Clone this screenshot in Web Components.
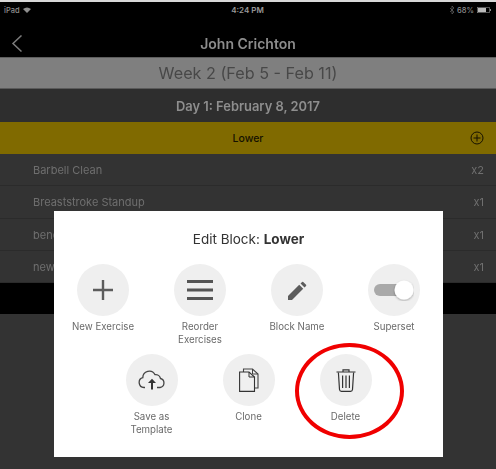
<!DOCTYPE html>
<html>
<head>
<meta charset="utf-8">
<title>Edit Block</title>
<style>
  html, body { margin: 0; padding: 0; background: #333; }
  body { width: 496px; height: 469px; overflow: hidden; font-family: Inter, "Liberation Sans", sans-serif; }
</style>
</head>
<body>
<ipad-screen>
  <status-bar></status-bar>
  <nav-bar>John Crichton</nav-bar>
  <week-bar>Week 2 (Feb 5 - Feb 11)</week-bar>
  <day-bar>Day 1: February 8, 2017</day-bar>
  <block-bar>Lower</block-bar>
  <exercise-row count="x2">Barbell Clean</exercise-row>
  <exercise-row count="x1">Breaststroke Standup</exercise-row>
  <exercise-row count="x1">bench</exercise-row>
  <exercise-row count="x1">new</exercise-row>
  <black-band></black-band>
  <edit-modal slot="overlay">
    <span slot="title">Edit Block: <b>Lower</b></span>
    <modal-action label="New Exercise">
      <svg viewBox="0 0 20 20" width="20" height="20"><path d="M10 0V20M0 10H20" stroke="#5c5c5c" stroke-width="2.400" fill="none"/></svg>
    </modal-action>
    <modal-action label="Reorder Exercises">
      <svg viewBox="0 0 26 20" width="26" height="20"><path d="M0 1.500H26M0 10H26M0 18.500H26" stroke="#555" stroke-width="3" fill="none"/></svg>
    </modal-action>
    <modal-action label="Block Name">
      <svg viewBox="0 0 20 20" width="19" height="19"><path d="M0 20V15.800L11.800 4 16 8.200 4.200 20ZM13.200 2.600 14.800 1Q15.400.5 16 1L19 4Q19.500 4.600 19 5.200L17.400 6.800Z" fill="#5c5c5c"/></svg>
    </modal-action>
    <modal-action label="Superset">
      <svg viewBox="0 0 40 22" width="40" height="22"><defs><filter id="s" x="-30%" y="-30%" width="160%" height="160%"><feDropShadow dx="0" dy="1" stdDeviation="0.800" flood-color="#000" flood-opacity="0.350"/></filter></defs><rect x="0" y="5" width="34" height="12" rx="6" fill="#a9a9a9"/><circle cx="30" cy="11" r="9.500" fill="#fff" filter="url(#s)"/></svg>
    </modal-action>
    <modal-action label="Save as Template">
      <svg viewBox="0 0 28 20" width="28" height="20"><path d="M7 17.500H6A5 5 0 0 1 4.800 7.700 6.500 6.500 0 0 1 17 4.600 5 5 0 0 1 22.500 8.500 4.600 4.600 0 0 1 22 17.500H19" fill="none" stroke="#444" stroke-width="1.300"/><path d="M13 19.500V13H10L14 8.800 18 13H15V19.500Z" fill="#333"/></svg>
    </modal-action>
    <modal-action label="Clone">
      <svg viewBox="0 0 20 24" width="20" height="24"><path d="M4.500 4V1H13.500L19 6V20H15.500" fill="none" stroke="#444" stroke-width="1.100"/><path d="M13.500 1V6H19" fill="none" stroke="#444" stroke-width="1"/><path d="M.6 4H10L15.500 9V23.400H.6Z" fill="#f0f0f0" stroke="#333" stroke-width="1.100"/><path d="M10 4V9H15.500" fill="none" stroke="#333" stroke-width="1"/></svg>
    </modal-action>
    <modal-action label="Delete">
      <svg viewBox="0 0 20 24" width="20" height="24"><path d="M.5 4H19.500M7 3.600V1.800H13V3.600" fill="none" stroke="#333" stroke-width="1.200"/><path d="M2.400 4.500 3.500 21.500Q3.700 23.300 5.400 23.300H14.600Q16.300 23.300 16.500 21.500L17.600 4.500" fill="none" stroke="#333" stroke-width="1.200"/><path d="M6.600 7.500V20M10 7.500V20M13.400 7.500V20" fill="none" stroke="#333" stroke-width="1.200"/></svg>
    </modal-action>
  </edit-modal>
  <red-circle slot="overlay"></red-circle>
</ipad-screen>

<script>
class IpadScreen extends HTMLElement {
  constructor() {
    super();
    this.attachShadow({ mode: "open" });
    this.shadowRoot.innerHTML = `
      <style>
        :host { display: block; position: relative; width: 496px; height: 469px; background: #333;
                overflow: hidden; border-top: 2px solid #d8d8d8; box-sizing: border-box; }
        .page { display: flex; flex-direction: column; filter: blur(0.55px); }
      </style>
      <div class="page"><slot></slot></div>
      <slot name="overlay"></slot>
    `;
  }
}

class StatusBar extends HTMLElement {
  constructor() {
    super();
    this.attachShadow({ mode: "open" });
    this.shadowRoot.innerHTML = `
      <style>
        :host { display: grid; grid-template-columns: 1fr auto 1fr; align-items: center; height: 16px;
                padding: 0 5px 0 4px; background: #000; color: #8f8f8f; font: 500 7.5px Inter, "Liberation Sans", sans-serif; }
        .left { display: flex; align-items: center; gap: 3px; }
        .mid { font-weight: 600; font-size: 8px; color: #999; }
        .right { display: flex; align-items: center; justify-content: flex-end; gap: 3px; }
        svg { display: block; }
      </style>
      <div class="left">iPad
        <svg width="8" height="6" viewBox="0 0 8 6"><path d="M0 2Q4-1 8 2L4 6Z" fill="#8f8f8f"/></svg>
      </div>
      <div class="mid">4:24 PM</div>
      <div class="right">
        <svg width="4" height="8" viewBox="0 0 4 8"><path d="M0 2 4 6 2 8V0L4 2 0 6" fill="none" stroke="#666" stroke-width=".7"/></svg>
        <span>68%</span>
        <svg width="14" height="6" viewBox="0 0 14 6"><rect x=".3" y=".3" width="12" height="5.400" fill="none" stroke="#8f8f8f" stroke-width=".6"/><rect x="1" y="1" width="8" height="4" fill="#bbb"/><rect x="13" y="2" width="1" height="2" fill="#8f8f8f"/></svg>
      </div>
    `;
  }
}

class NavBar extends HTMLElement {
  constructor() {
    super();
    this.attachShadow({ mode: "open" });
    this.shadowRoot.innerHTML = `
      <style>
        :host { display: flex; position: relative; align-items: center; justify-content: center; height: 39px;
                background: #000; color: #8c8c8c; font: 600 14px Inter, "Liberation Sans", sans-serif; padding-top: 11px; box-sizing: border-box; }
        svg { position: absolute; left: 11px; top: 17px; }
      </style>
      <svg width="11" height="17" viewBox="0 0 11 17"><path d="M10.500 .5 2 8.500 10.500 16.500" fill="none" stroke="#7c7c7c" stroke-width="1.500"/></svg>
      <slot></slot>
    `;
  }
}

class WeekBar extends HTMLElement {
  constructor() {
    super();
    this.attachShadow({ mode: "open" });
    this.shadowRoot.innerHTML = `
      <style>
        :host { display: flex; align-items: center; justify-content: center; height: 32px;
                background: #7f7f7f; color: #484848; font: 400 16.200px Inter, "Liberation Sans", sans-serif;
                border-top: 1px solid #5e5e5e; border-bottom: 1px solid #5a5a5a; box-sizing: border-box; }
      </style>
      <slot></slot>
    `;
  }
}

class DayBar extends HTMLElement {
  constructor() {
    super();
    this.attachShadow({ mode: "open" });
    this.shadowRoot.innerHTML = `
      <style>
        :host { display: flex; align-items: center; justify-content: center; height: 33px; padding-top: 1px; box-sizing: border-box;
                background: #2e2e2e; color: #8e8e8e; font: 600 12.900px Inter, "Liberation Sans", sans-serif; }
      </style>
      <slot></slot>
    `;
  }
}

class BlockBar extends HTMLElement {
  constructor() {
    super();
    this.attachShadow({ mode: "open" });
    this.shadowRoot.innerHTML = `
      <style>
        :host { display: flex; position: relative; align-items: center; justify-content: center; height: 32px;
                background: #806a00; color: #151100; font: 500 10.500px Inter, "Liberation Sans", sans-serif; }
        svg { position: absolute; right: 12px; top: 9px; }
      </style>
      <slot></slot>
      <svg width="14" height="14" viewBox="0 0 14 14"><circle cx="7" cy="7" r="6" fill="none" stroke="#151100" stroke-width="1"/><path d="M7 3.500V10.500M3.500 7H10.500" stroke="#151100" stroke-width="1"/></svg>
    `;
  }
}

class ExerciseRow extends HTMLElement {
  constructor() {
    super();
    this.attachShadow({ mode: "open" });
    this.shadowRoot.innerHTML = `
      <style>
        :host { display: flex; align-items: center; justify-content: space-between; height: 32.250px; box-sizing: border-box;
                padding: 1px 12px 0 33px; background: #333; color: #6f6f6f; border-bottom: 1px solid #2b2b2b;
                font: 400 11px Inter, "Liberation Sans", sans-serif; }
      </style>
      <slot></slot><span class="count"></span>
    `;
    this.shadowRoot.querySelector(".count").textContent = this.getAttribute("count");
  }
}

class BlackBand extends HTMLElement {
  constructor() {
    super();
    this.attachShadow({ mode: "open" });
    this.shadowRoot.innerHTML = `
      <style>
        :host { display: block; height: 31px; background: #000; }
      </style>
    `;
  }
}

class EditModal extends HTMLElement {
  constructor() {
    super();
    this.attachShadow({ mode: "open" });
    this.shadowRoot.innerHTML = `
      <style>
        :host { position: absolute; left: 54px; top: 209px; width: 389px; height: 246px; background: #fff;
                display: flex; flex-direction: column; filter: blur(0.45px); box-sizing: border-box; }
        .title { height: 53px; display: flex; align-items: flex-start; justify-content: center; padding-top: 20px; box-sizing: border-box;
                 color: #333; font: 400 13.500px Inter, "Liberation Sans", sans-serif; }
        .title ::slotted(span) { white-space: pre; }
        .grid { display: flex; flex-wrap: wrap; justify-content: center; row-gap: 0; }
      </style>
      <div class="title"><slot name="title"></slot></div>
      <div class="grid"><slot></slot></div>
    `;
  }
}

class ModalAction extends HTMLElement {
  constructor() {
    super();
    this.attachShadow({ mode: "open" });
    this.shadowRoot.innerHTML = `
      <style>
        :host { display: flex; flex-direction: column; align-items: center; width: 97px; height: 90px; }
        .circle { width: 52px; height: 52px; border-radius: 50%; background: #efefef;
                  display: flex; align-items: center; justify-content: center; }
        .label { width: 76px; margin-top: 4px; text-align: center; color: #6a6a6a;
                 font: 400 9.700px/13px Inter, "Liberation Sans", sans-serif; }
        ::slotted(svg) { display: block; }
      </style>
      <div class="circle"><slot></slot></div>
      <div class="label"></div>
    `;
    this.shadowRoot.querySelector(".label").textContent = this.getAttribute("label");
  }
}

class RedCircle extends HTMLElement {
  constructor() {
    super();
    this.attachShadow({ mode: "open" });
    this.shadowRoot.innerHTML = `
      <style>
        :host { position: absolute; left: 295px; top: 341px; width: 109px; height: 96px; box-sizing: border-box;
                border: 4px solid #f00000; border-radius: 50%; filter: blur(0.4px); }
      </style>
    `;
  }
}

customElements.define("ipad-screen", IpadScreen);
customElements.define("status-bar", StatusBar);
customElements.define("nav-bar", NavBar);
customElements.define("week-bar", WeekBar);
customElements.define("day-bar", DayBar);
customElements.define("block-bar", BlockBar);
customElements.define("exercise-row", ExerciseRow);
customElements.define("black-band", BlackBand);
customElements.define("edit-modal", EditModal);
customElements.define("modal-action", ModalAction);
customElements.define("red-circle", RedCircle);
</script>
</body>
</html>
